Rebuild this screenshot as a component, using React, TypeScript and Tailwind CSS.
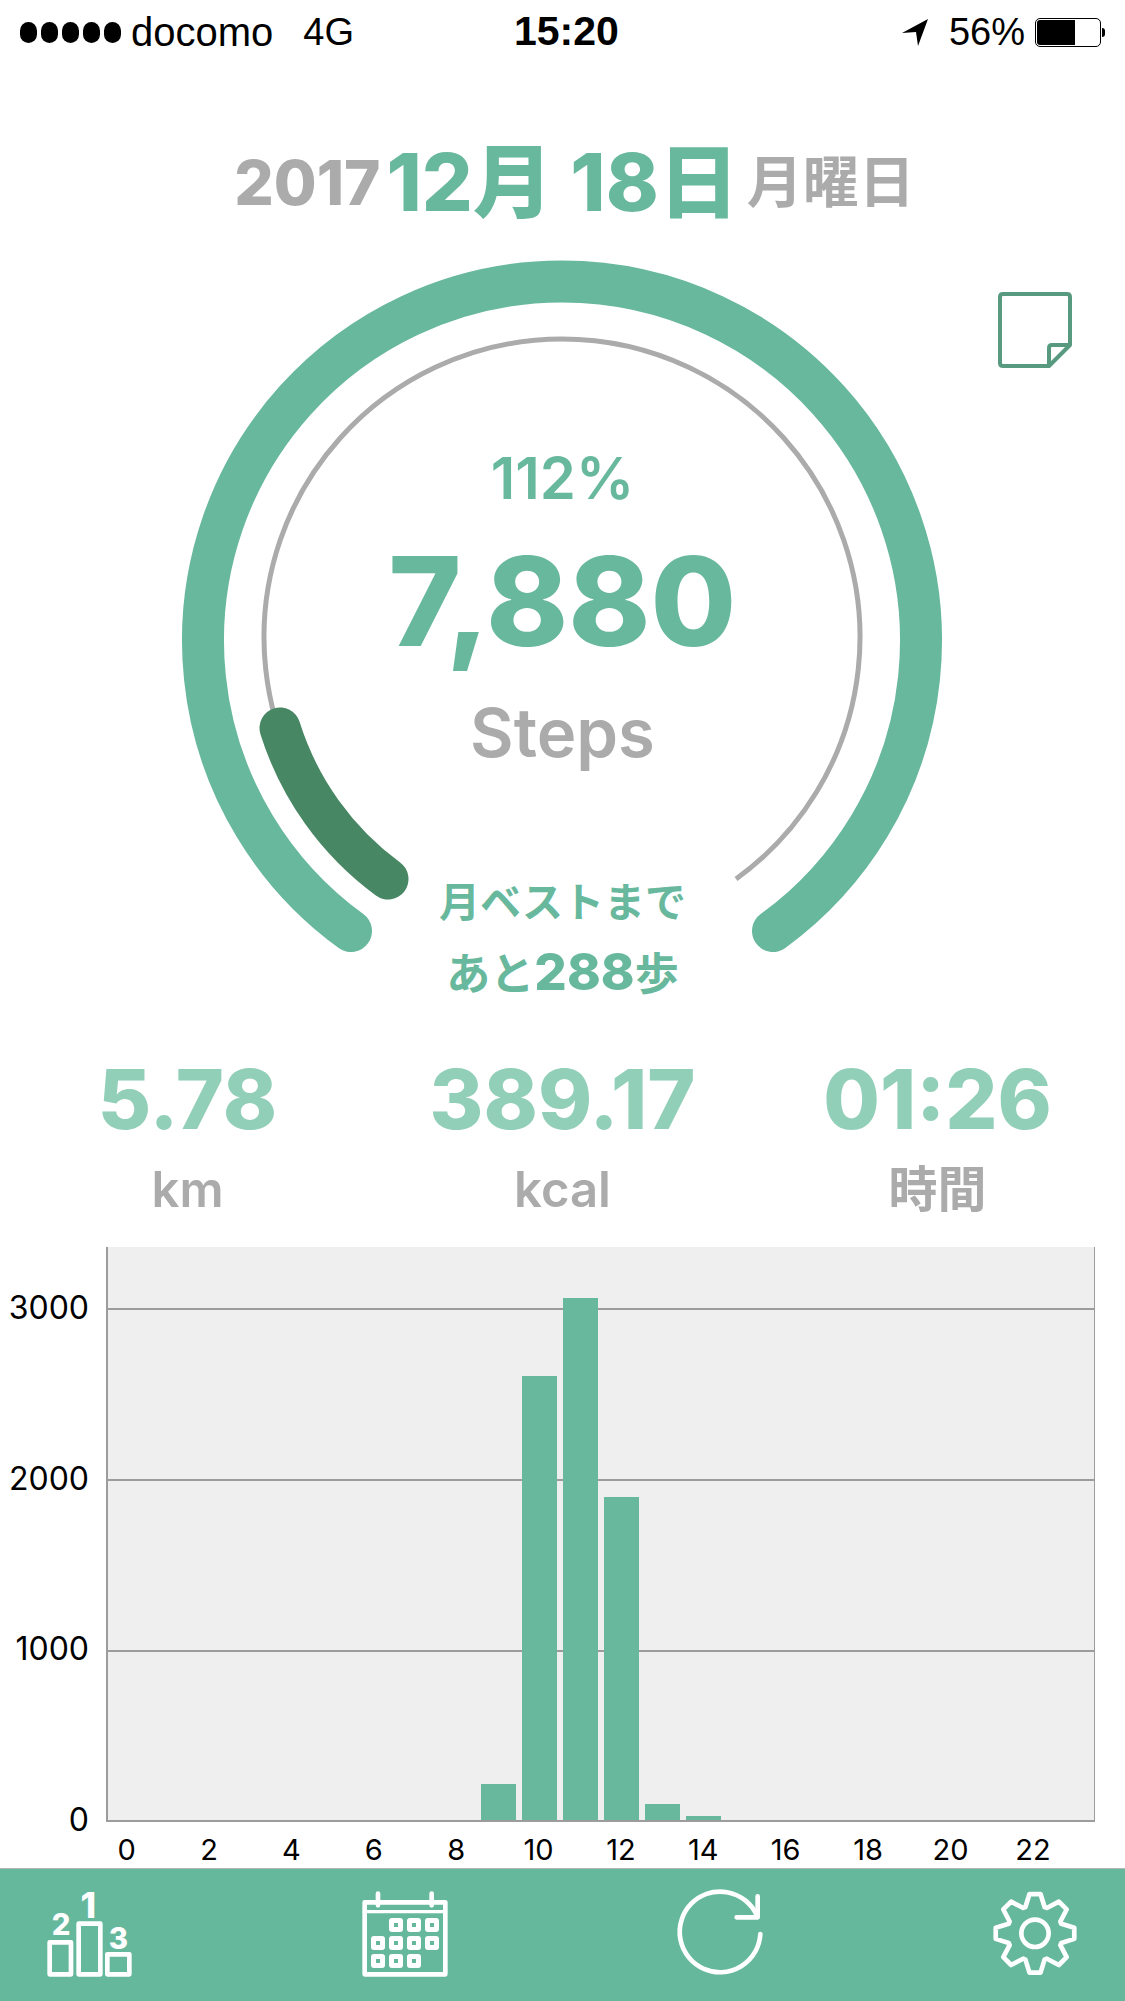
import React from "react";

const hourBars: Record<number, number> = { 9: 36, 10: 444, 11: 522, 12: 323, 13: 16, 14: 4 };

const SignalDots = () => (
  <div className="flex gap-[4px]">
    {[0, 1, 2, 3, 4].map((i) => (
      <div key={i} className="w-[17px] h-[21px] rounded-full bg-black" />
    ))}
  </div>
);

const Battery = () => (
  <div className="flex items-center">
    <div className="w-[66px] h-[29px] rounded-[5px] border border-black p-[1px]">
      <div className="w-[38px] h-full bg-black rounded-l-[3px]" />
    </div>
    <div className="w-[3px] h-[9px] bg-black rounded-r-full ml-[1px]" />
  </div>
);

const StatusBar = () => (
  <div className="relative h-[64px] flex items-center justify-between pl-[20px] pr-[20px] font-['Liberation_Sans',sans-serif] text-black text-[38px]">
    <div className="flex items-center gap-[10px]">
      <SignalDots />
      <span className="text-[40px]">docomo</span>
      <span className="ml-[20px]">4G</span>
    </div>
    <div className="absolute left-[514px] top-[8px] font-bold text-[41px] leading-[47px]">15:20</div>
    <div className="flex items-center gap-[10px]">
      <svg width="28" height="28" viewBox="0 0 28 28" className="mr-[10px]">
        <path d="M1 15 L27 1 L17 28 L15 14 Z" fill="#000" />
      </svg>
      <span>56%</span>
      <Battery />
    </div>
  </div>
);

const DateHeader = () => (
  <div className="h-[168px] pt-[68px] pl-[24px] flex justify-center items-center font-['Inter','Noto_Sans_CJK_JP',sans-serif] font-bold">
    <span className="text-[#ababab] text-[62px] font-extrabold">2017</span>
    <span className="text-[#68b89d] text-[80px] font-extrabold ml-[6px] whitespace-pre">12月 18日</span>
    <span className="text-[#ababab] text-[56px] ml-[8px]">月曜日</span>
  </div>
);

const StepRing = () => (
  <svg className="absolute left-0 top-0" width="1125" height="808" viewBox="0 232 1125 808" fill="none">
    <path d="M351 931 A359 359 0 1 1 773 931" stroke="#68b89d" strokeWidth="42" strokeLinecap="round" />
    <path d="M388 879 A298 298 0 1 1 736 879" stroke="#ababab" strokeWidth="5" />
    <path d="M280 728 A298 298 0 0 0 388 879" stroke="#478764" strokeWidth="41" strokeLinecap="round" />
  </svg>
);

const NoteIcon = () => (
  <svg className="absolute left-[997px] top-[59px]" width="76" height="77" viewBox="0 0 76 77" fill="none" stroke="#589a80" strokeWidth="4" strokeLinejoin="round">
    <path d="M6 3 H70 Q73 3 73 6 V54 L52 75 H6 Q3 75 3 72 V6 Q3 3 6 3 Z" />
    <path d="M52 75 V57 Q52 54 55 54 H73" />
  </svg>
);

const RingSection = () => (
  <div className="relative h-[808px] font-['Inter','Noto_Sans_CJK_JP',sans-serif]">
    <StepRing />
    <NoteIcon />
    <div className="relative flex flex-col items-center pt-[216px]">
      <div className="text-[#68b89d] text-[58px] font-semibold leading-[60px]">112%</div>
      <div className="text-[#68b89d] text-[124px] font-extrabold leading-[120px] mt-[33px]">7,880</div>
      <div className="text-[#ababab] text-[67px] font-semibold leading-[80px] mt-[32px]">Steps</div>
      <div className="text-[#68b89d] text-[41px] font-bold leading-[70px] mt-[94px]">月ベストまで</div>
      <div className="text-[#68b89d] text-[44px] font-bold leading-[70px]">
        あと<span className="font-extrabold text-[51px]">288</span>歩
      </div>
    </div>
  </div>
);

const Stat = ({ value, unit }: { value: string; unit: string }) => (
  <div className="w-[375px] flex flex-col items-center">
    <div className="text-[#91cfb9] text-[82px] font-extrabold leading-[90px]">{value}</div>
    <div className="text-[#ababab] text-[49px] font-semibold leading-[60px] mt-[15px]">{unit}</div>
  </div>
);

const Stats = () => (
  <div className="h-[207px] pt-[15px] flex font-['Inter','Noto_Sans_CJK_JP',sans-serif]">
    <Stat value="5.78" unit="km" />
    <Stat value="389.17" unit="kcal" />
    <Stat value="01:26" unit="時間" />
  </div>
);

const HourlyChart = () => (
  <div className="h-[621px] flex font-['Inter',sans-serif] text-black">
    <div className="w-[106px] h-[593px] pt-[41px] pr-[17px] flex flex-col justify-between items-end text-[32px]">
      {["3000", "2000", "1000", "0"].map((label) => (
        <div key={label} className="h-[40px] leading-[40px]">{label}</div>
      ))}
    </div>
    <div className="w-[989px]">
      <div className="relative h-[575px] bg-[#efefef] border-l-2 border-r border-b-2 border-[#9c9c9c] pt-[61px]">
        <div className="h-[171px] border-t-2 border-[#9c9c9c]" />
        <div className="h-[171px] border-t-2 border-[#9c9c9c]" />
        <div className="h-[170px] border-t-2 border-[#9c9c9c]" />
        <div className="absolute inset-0 flex items-end">
          {Array.from({ length: 24 }).map((_, hour) => (
            <div key={hour} className="flex-1 px-[3px]">
              {hourBars[hour] ? <div className="bg-[#68b89d]" style={{ height: hourBars[hour] }} /> : null}
            </div>
          ))}
        </div>
      </div>
      <div className="flex h-[46px] pt-[10px] items-center text-[29px]">
        {Array.from({ length: 12 }).map((_, i) => (
          <div key={i} className="w-[82.4px]">
            <div className="w-[41.2px] text-center">{i * 2}</div>
          </div>
        ))}
      </div>
    </div>
  </div>
);

const PodiumIcon = () => (
  <svg width="110" height="105" viewBox="0 0 330 315" fill="none" stroke="#fff" strokeWidth="14" strokeLinejoin="round">
    <rect x="44" y="187" width="64" height="96" />
    <rect x="131" y="131" width="65" height="152" />
    <rect x="217" y="223" width="66" height="60" />
    <g fill="#fff" stroke="none" fontFamily="Inter, sans-serif" fontWeight="800" textAnchor="middle">
      <text x="160" y="115" fontSize="106">1</text>
      <text x="78" y="166" fontSize="88">2</text>
      <text x="250" y="206" fontSize="88">3</text>
    </g>
  </svg>
);

const calendarCells = [
  [117, 114], [171, 114], [225, 114],
  [63, 168], [117, 168], [171, 168], [225, 168],
  [63, 222], [117, 222], [171, 222],
];

const CalendarIcon = () => (
  <svg width="110" height="105" viewBox="0 0 330 315" fill="none" stroke="#fff" strokeWidth="14" strokeLinejoin="round" strokeLinecap="round">
    <rect x="44" y="67" width="242" height="216" />
    <path d="M44 95 H286" strokeWidth="10" />
    <path d="M84 41 V76 M245 41 V76" />
    {calendarCells.map(([x, y]) => (
      <g key={`${x}-${y}`}>
        <rect x={x} y={y} width="42" height="42" rx="9" fill="#fff" stroke="none" />
        <rect x={x + 15} y={y + 15} width="12" height="12" fill="#66b89d" stroke="none" />
      </g>
    ))}
  </svg>
);

const RefreshIcon = () => (
  <svg width="110" height="105" viewBox="0 0 330 315" fill="none" stroke="#fff" strokeWidth="14" strokeLinejoin="round" strokeLinecap="round">
    <path d="M286 162 A121 121 0 1 1 275 105" />
    <path d="M278 49 V112 H215" />
  </svg>
);

// 8 toothed gear outline around the middle of the icon
const gearPath = () => {
  const pts: string[] = [];
  for (let t = 0; t < 8; t++) {
    const a = -90 + t * 45;
    const steps: [number, number][] = [
      [84, a - 20],
      [119, a - 8],
      [119, a + 8],
      [84, a + 20],
    ];
    steps.forEach(([r, deg]) => {
      const rad = (deg * Math.PI) / 180;
      pts.push(`${(165 + r * Math.cos(rad)).toFixed(1)} ${(160 + r * Math.sin(rad)).toFixed(1)}`);
    });
  }
  return `M${pts.join(" L")} Z`;
};

const GearIcon = () => (
  <svg width="110" height="105" viewBox="0 0 330 315" fill="none" stroke="#fff" strokeWidth="14" strokeLinejoin="round">
    <path d={gearPath()} />
    <circle cx="165" cy="160" r="41" />
  </svg>
);

const TabBar = () => (
  <div className="h-[133px] bg-[#66b89d] border-t border-[#b5b5b5] pl-[35px] pr-[35px] pt-[11px] flex justify-between">
    <PodiumIcon />
    <CalendarIcon />
    <RefreshIcon />
    <GearIcon />
  </div>
);

export default function App() {
  return (
    <div className="w-[1125px] h-[2001px] bg-white overflow-hidden">
      <StatusBar />
      <DateHeader />
      <RingSection />
      <Stats />
      <HourlyChart />
      <TabBar />
    </div>
  );
}
